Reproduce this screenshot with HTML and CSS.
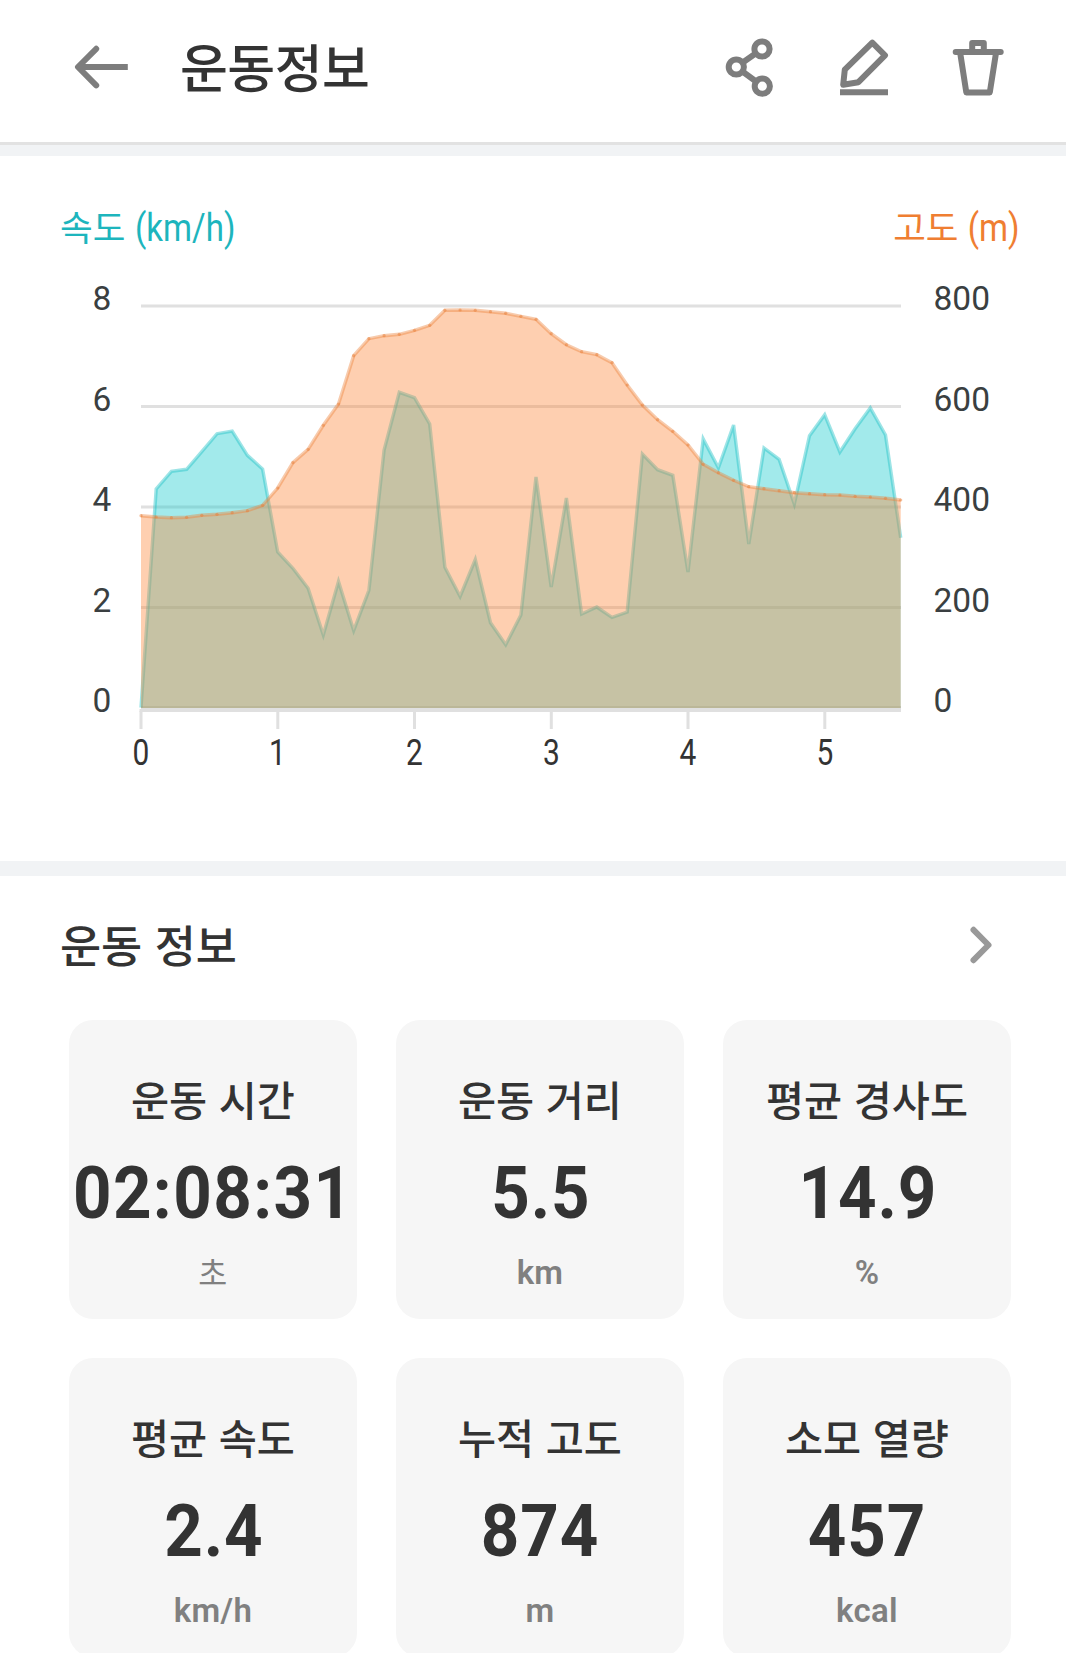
FILE: index.html
```
<!DOCTYPE html>
<html lang="ko">

<head>
    <meta charset="UTF-8">
    <meta name="viewport" content="width=device-width, initial-scale=1.0">
    <title>운동정보</title>
    <link rel="stylesheet" href="styles.css">
</head>

<body>
    <header class="header">
        <svg class="icon back" width="56" height="46" viewBox="74 44 56 46">
            <path d="M96.2 48.8 L78 67 L96.2 85.4" stroke-linecap="round" />
            <path d="M79 67 H127.8" />
        </svg>
        <h1>운동정보</h1>
        <div class="actions">
            <svg class="icon" width="50" height="60" viewBox="725 37 50 60">
                <path d="M736.3 67 L762 49 M736.3 67 L762.3 86" />
                <circle cx="736.3" cy="67" r="7.6" />
                <circle cx="762" cy="49" r="7.6" />
                <circle cx="762.3" cy="86.2" r="7.6" />
            </svg>
            <svg class="icon" width="50" height="60" viewBox="839 37 50 60">
                <path d="M872.3 42.6 L885 55.3 L858.4 82.2 L843.2 84.8 L844.8 69.6 Z" />
                <path d="M840 92.3 H888" />
            </svg>
            <svg class="icon" width="52" height="60" viewBox="952 37 52 60">
                <path d="M955.7 52 H1000.7" stroke-linecap="round" />
                <path d="M972.2 52 V43 H983.8 V52" />
                <path d="M960.2 53 L966.3 92.4 H989.8 L996 53" />
            </svg>
        </div>
    </header>

    <main>
        <section class="chart-section">
            <div class="legend">
                <span class="speed">속도 <span class="unit-text">(km/h)</span></span>
                <span class="altitude">고도 <span class="unit-text">(m)</span></span>
            </div>
            <svg class="chart" width="1066" height="510" viewBox="0 270 1066 510">
                <g class="grid">
                    <path d="M141 306 H901" />
                    <path d="M141 406.5 H901" />
                    <path d="M141 507 H901" />
                    <path d="M141 607.5 H901" />
                    <path d="M141 707.5 H901" />
                </g>
                <g id="areas"></g>
                <g class="axis">
                    <path d="M139.5 710.5 H901" />
                    <path d="M141 711 V729 M277.8 711 V729 M414.5 711 V729 M551.3 711 V729 M688 711 V729 M824.8 711 V729" />
                </g>
                <g class="y-labels" text-anchor="middle">
                    <text x="102" y="310">8</text>
                    <text x="102" y="411">6</text>
                    <text x="102" y="511">4</text>
                    <text x="102" y="612">2</text>
                    <text x="102" y="712">0</text>
                </g>
                <g class="y-labels">
                    <text x="933.5" y="310">800</text>
                    <text x="933.5" y="411">600</text>
                    <text x="933.5" y="511">400</text>
                    <text x="933.5" y="612">200</text>
                    <text x="933.5" y="712">0</text>
                </g>
                <g class="x-labels" text-anchor="middle">
                    <text transform="translate(141 765) scale(.82 1)">0</text>
                    <text transform="translate(277.5 765) scale(.82 1)">1</text>
                    <text transform="translate(414.5 765) scale(.82 1)">2</text>
                    <text transform="translate(551.3 765) scale(.82 1)">3</text>
                    <text transform="translate(688 765) scale(.82 1)">4</text>
                    <text transform="translate(825 765) scale(.82 1)">5</text>
                </g>
            </svg>
        </section>

        <section class="info-section">
            <div class="section-title">
                <h2>운동 정보</h2>
                <svg class="icon chevron" width="24" height="40" viewBox="969 925 24 40">
                    <path d="M973.5 929.8 L988.5 945 L973.5 960.2" stroke-linecap="round" />
                </svg>
            </div>
            <div class="cards">
                <div class="card">
                    <h3>운동 시간</h3>
                    <strong class="time">02:08:31</strong>
                    <span class="unit ko">초</span>
                </div>
                <div class="card">
                    <h3>운동 거리</h3>
                    <strong>5.5</strong>
                    <span class="unit">km</span>
                </div>
                <div class="card">
                    <h3>평균 경사도</h3>
                    <strong>14.9</strong>
                    <span class="unit">%</span>
                </div>
                <div class="card">
                    <h3>평균 속도</h3>
                    <strong>2.4</strong>
                    <span class="unit">km/h</span>
                </div>
                <div class="card">
                    <h3>누적 고도</h3>
                    <strong>874</strong>
                    <span class="unit">m</span>
                </div>
                <div class="card">
                    <h3>소모 열량</h3>
                    <strong>457</strong>
                    <span class="unit">kcal</span>
                </div>
            </div>
        </section>
    </main>
    <script src="chart.js"></script>
</body>

</html>
```
FILE: styles.css
```
* {
    box-sizing: border-box;
}

body {
    margin: 0;
    height: 1653px;
    overflow: hidden;
    background-color: #fff;
    color: #333;
    font-family: "Noto Sans CJK KR", sans-serif;
}

h1,
h2,
h3 {
    margin: 0;
    font-weight: 500;
}

.header {
    display: flex;
    align-items: center;
    height: 145px;
    padding: 0 62px 8px 74px;
    border-bottom: 3px solid #e2e2e2;
}

.header h1 {
    margin-left: 50px;
    padding-bottom: 3px;
    font-size: 52px;
    line-height: 76px;
    letter-spacing: -0.5px;
}

.actions {
    display: flex;
    gap: 63.5px;
    margin-left: auto;
}

.icon {
    display: block;
    fill: none;
    stroke: #7d7d7d;
    stroke-width: 6;
    stroke-linejoin: round;
}

.icon circle {
    fill: #fff;
}

.chart-section {
    height: 731px;
    border-top: 11px solid #f1f3f5;
    border-bottom: 15px solid #f1f3f5;
}

.legend {
    display: flex;
    justify-content: space-between;
    height: 114px;
    padding: 44px 46px 0 60px;
    font-size: 35.5px;
    line-height: 52px;
}

.legend .unit-text {
    display: inline-block;
    font-family: Roboto, sans-serif;
    font-size: 38px;
    font-weight: 400;
    transform: scaleX(0.87);
    transform-origin: left;
}

.legend .altitude .unit-text {
    margin-left: -8px;
    transform-origin: right;
}

.speed {
    color: #1db5bd;
}

.altitude {
    color: #ef7e32;
}

.chart {
    display: block;
}

.grid path,
.axis path {
    fill: none;
    stroke: #e0e0e0;
    stroke-width: 3;
}

.speed-area {
    fill: rgba(22, 202, 204, 0.4);
}

.speed-line {
    fill: none;
    stroke: rgba(25, 190, 196, 0.42);
    stroke-width: 3.4;
}

.altitude-area {
    fill: rgba(253, 135, 57, 0.4);
}

.altitude-line {
    fill: none;
    stroke: rgba(235, 130, 60, 0.42);
    stroke-width: 3.4;
}

.altitude-dot {
    fill: rgba(232, 125, 55, 0.5);
}

.y-labels {
    font-family: Roboto, sans-serif;
    font-size: 33.5px;
    fill: #3a3f41;
}

.x-labels {
    font-family: Roboto, sans-serif;
    font-size: 36.5px;
    fill: #333;
}

.section-title {
    display: flex;
    align-items: center;
    justify-content: space-between;
    height: 144px;
    padding: 0 73px 6px 60px;
}

.section-title h2 {
    padding-bottom: 2px;
    font-size: 44.7px;
    line-height: 64px;
}

.chevron {
    stroke: #999;
}

.cards {
    display: grid;
    grid-template-columns: repeat(3, 288px);
    gap: 39px;
    padding-left: 69px;
}

.card {
    display: flex;
    flex-direction: column;
    align-items: center;
    height: 299px;
    padding-top: 48px;
    border-radius: 24px;
    background-color: #f6f6f6;
}

.card h3 {
    font-size: 41.4px;
    line-height: 60px;
}

.card strong {
    margin-top: 26px;
    font-family: Roboto, sans-serif;
    font-size: 71.5px;
    line-height: 80px;
    letter-spacing: 1px;
    text-indent: 1px;
    transform: scaleX(0.94);
}

.card .time {
    letter-spacing: 1.5px;
}

.card .unit {
    margin-top: 17px;
    color: #808080;
    font-family: Roboto, sans-serif;
    font-size: 33px;
    font-weight: 600;
    line-height: 44px;
    letter-spacing: 0.3px;
}

.card .unit.ko {
    margin-top: 15px;
    font-family: "Noto Sans CJK KR", sans-serif;
    font-size: 31.5px;
    font-weight: 400;
}
```
FILE: chart.js
```
const LEFT = 141;
const STEP = 15.194;
const BASE = 708;

const speed = [
    707.5, 489, 471.3, 469.3, 451.7, 433.7, 431, 455.3, 469, 552,
    568.3, 588.3, 635, 581.5, 630.5, 590.3, 450, 392.3, 397.7, 424,
    567.3, 596.5, 559.5, 622.7, 644.8, 615, 477, 587, 498, 614,
    607, 617.3, 612, 454, 469.7, 475.3, 572, 439, 467.7, 425,
    544, 448, 459.3, 504, 435.7, 414.7, 452, 428.7, 408, 435, 537.7
];

const altitude = [
    515.7, 517, 517.7, 517.3, 515.3, 514.3, 512.7, 510.7, 505.3, 488,
    462.7, 449.3, 425.3, 404, 355.7, 338.7, 335.7, 334.3, 330.3, 325.3,
    310.3, 310, 310.3, 311.7, 313.3, 316.3, 319.3, 333.7, 344.7, 351.7,
    354.7, 362.7, 385, 405, 419.7, 431.3, 445, 464.3, 472.7, 480.3,
    486.7, 488.7, 490.7, 492.7, 493.7, 494.7, 495, 496.3, 497, 498.3, 500
];

const areas = document.getElementById('areas');

function add(tag, attrs) {
    const el = document.createElementNS('http://www.w3.org/2000/svg', tag);
    for (const key in attrs) {
        el.setAttribute(key, attrs[key]);
    }
    areas.appendChild(el);
}

function drawSeries(name, values) {
    const points = values.map((y, i) => `${(LEFT + i * STEP).toFixed(1)},${y}`).join(' ');
    const right = LEFT + (values.length - 1) * STEP;
    add('polygon', { class: `${name}-area`, points: `${LEFT},${BASE} ${points} ${right},${BASE}` });
    add('polyline', { class: `${name}-line`, points: points });
}

drawSeries('speed', speed);
drawSeries('altitude', altitude);

altitude.forEach((y, i) => {
    add('circle', { class: 'altitude-dot', cx: LEFT + i * STEP, cy: y, r: 1.6 });
});
```
